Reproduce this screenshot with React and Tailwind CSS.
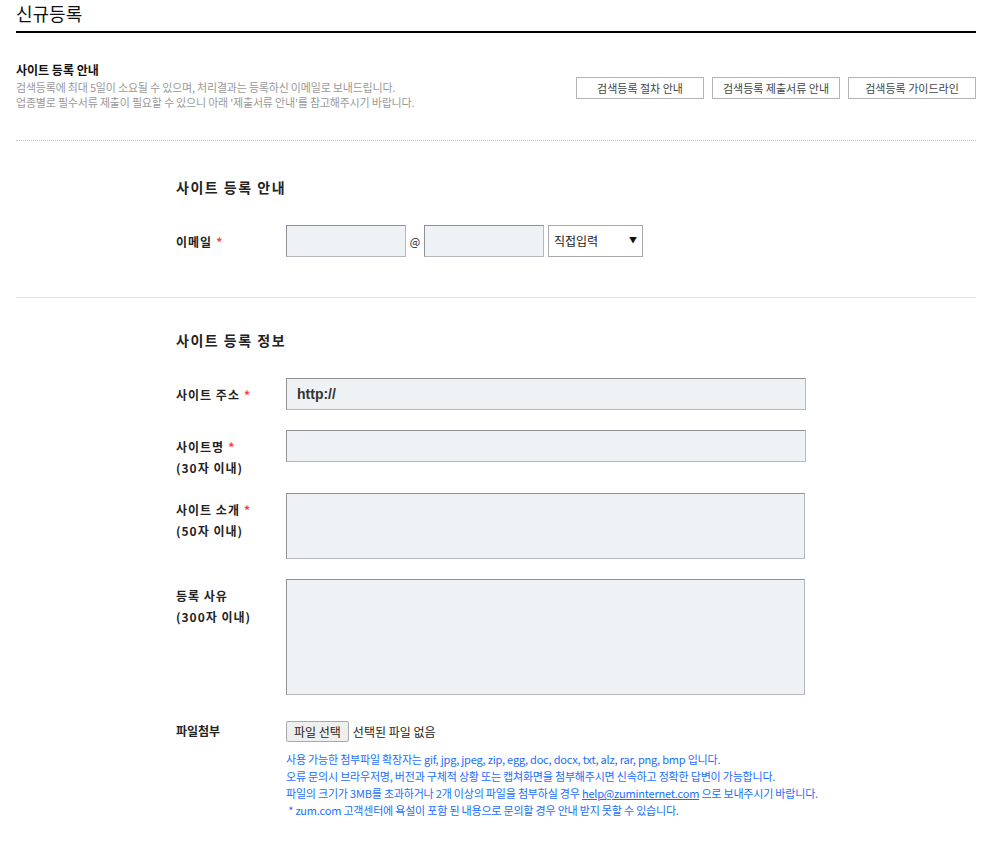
import { useState } from "react";

const font = { fontFamily: '"Noto Sans CJK KR", "Noto Sans", sans-serif' };

const Req = () => <span className="ml-1 text-[#ff3b3b]">*</span>;

const Label = ({ children, sub }) => (
  <div className="w-[110px] shrink-0 pt-[6px] text-[12px] font-bold leading-[21px] tracking-[1px] text-[#222]">
    <div>{children}</div>
    {sub && <div>{sub}</div>}
  </div>
);

const inputCls =
  "block bg-[#eff2f5] border border-t-[#8e9196] border-l-[#8e9196] border-r-[#b4b7bb] border-b-[#b4b7bb] outline-none text-[14px] px-[10px]";

export default function App() {
  const [domain, setDomain] = useState("직접입력");

  return (
    <div className="w-[984px] bg-white pl-4 pr-2 pb-6" style={font}>
      <h1 className="pt-[1px] pb-[6px] text-[18px] leading-[24px] text-[#111]">신규등록</h1>
      <div className="h-[2px] bg-black" />

      <div className="flex items-start justify-between pt-[28px] pb-[30px]">
        <div>
          <div className="text-[12px] font-bold leading-[18px] text-[#111]">사이트 등록 안내</div>
          <p className="mt-[1px] text-[11px] leading-[15px] tracking-[-0.2px] text-[#999]">
            검색등록에 최대 5일이 소요될 수 있으며, 처리결과는 등록하신 이메일로 보내드립니다.
            <br />
            업종별로 필수서류 제출이 필요할 수 있으니 아래 '제출서류 안내'를 참고해주시기 바랍니다.
          </p>
        </div>
        <div className="mt-[16px] flex gap-2">
          {["검색등록 절차 안내", "검색등록 제출서류 안내", "검색등록 가이드라인"].map((t) => (
            <button
              key={t}
              className="h-[22px] w-[128px] border border-[#b5b5b5] bg-white text-[11px] text-[#444]"
            >
              {t}
            </button>
          ))}
        </div>
      </div>

      <div className="border-t border-dotted border-[#c4c4c4]" />

      <section className="pl-[160px] pt-[36px] pb-[40px]">
        <h2 className="text-[14px] font-bold leading-[20px] tracking-[1.5px] text-[#222]">사이트 등록 안내</h2>
        <div className="mt-[28px] flex">
          <Label>
            이메일
            <Req />
          </Label>
          <div className="flex items-center">
            <input className={`${inputCls} h-[32px] w-[120px]`} />
            <span className="w-[18px] text-center text-[11px] text-[#222]">@</span>
            <input className={`${inputCls} h-[32px] w-[120px]`} />
            <div className="relative ml-1 h-[32px] w-[95px] border border-[#aaa] bg-white">
              <select
                value={domain}
                onChange={(e) => setDomain(e.target.value)}
                className="h-full w-full appearance-none bg-transparent pl-[5px] text-[12px] text-[#222] outline-none"
              >
                <option>직접입력</option>
                <option>naver.com</option>
                <option>gmail.com</option>
              </select>
              <span className="pointer-events-none absolute right-[5px] top-[9px] text-[8px] leading-[10px] text-[#111]">▼</span>
            </div>
          </div>
        </div>
      </section>

      <div className="border-t border-[#e5e5e5]" />

      <section className="pl-[160px] pt-[32px]">
        <h2 className="text-[14px] font-bold leading-[20px] tracking-[1.5px] text-[#222]">사이트 등록 정보</h2>

        <div className="mt-[28px] flex">
          <Label>
            사이트 주소
            <Req />
          </Label>
          <input
            defaultValue="http://"
            className={`${inputCls} h-[32px] w-[520px] font-bold text-[#333]`}
            style={{ fontFamily: '"Liberation Sans", Arial, sans-serif' }}
          />
        </div>

        <div className="mt-[20px] flex">
          <Label sub="(30자 이내)">
            사이트명
            <Req />
          </Label>
          <input className={`${inputCls} h-[32px] w-[520px]`} />
        </div>

        <div className="mt-[15px] flex">
          <Label sub="(50자 이내)">
            사이트 소개
            <Req />
          </Label>
          <textarea className={`${inputCls} h-[66px] w-[519px] resize-none`} />
        </div>

        <div className="mt-[20px] flex">
          <Label sub="(300자 이내)">등록 사유</Label>
          <textarea className={`${inputCls} h-[116px] w-[519px] resize-none`} />
        </div>

        <div className="mt-[26px] flex">
          <div className="w-[110px] shrink-0 pt-[1px] text-[12px] font-bold leading-[18px] text-[#222]">파일첨부</div>
          <div>
            <div className="flex items-center">
              <button className="h-[21px] rounded-[2px] border border-[#a9a9a9] bg-[#efefef] px-[7px] text-[12px] text-[#222]">
                파일 선택
              </button>
              <span className="ml-1 text-[12px] text-[#222]">선택된 파일 없음</span>
            </div>
            <div className="mt-[9px] text-[11px] leading-[17px] tracking-[-0.2px] text-[#1a6dff]">
              <p>사용 가능한 첨부파일 확장자는 gif, jpg, jpeg, zip, egg, doc, docx, txt, alz, rar, png, bmp 입니다.</p>
              <p>오류 문의시 브라우저명, 버전과 구체적 상황 또는 캡쳐화면을 첨부해주시면 신속하고 정확한 답변이 가능합니다.</p>
              <p>
                파일의 크기가 3MB를 초과하거나 2개 이상의 파일을 첨부하실 경우{" "}
                <a href="#" className="underline">help@zuminternet.com</a> 으로 보내주시기 바랍니다.
              </p>
              <p>&nbsp;* zum.com 고객센터에 욕설이 포함 된 내용으로 문의할 경우 안내 받지 못할 수 있습니다.</p>
            </div>
          </div>
        </div>
      </section>
    </div>
  );
}
